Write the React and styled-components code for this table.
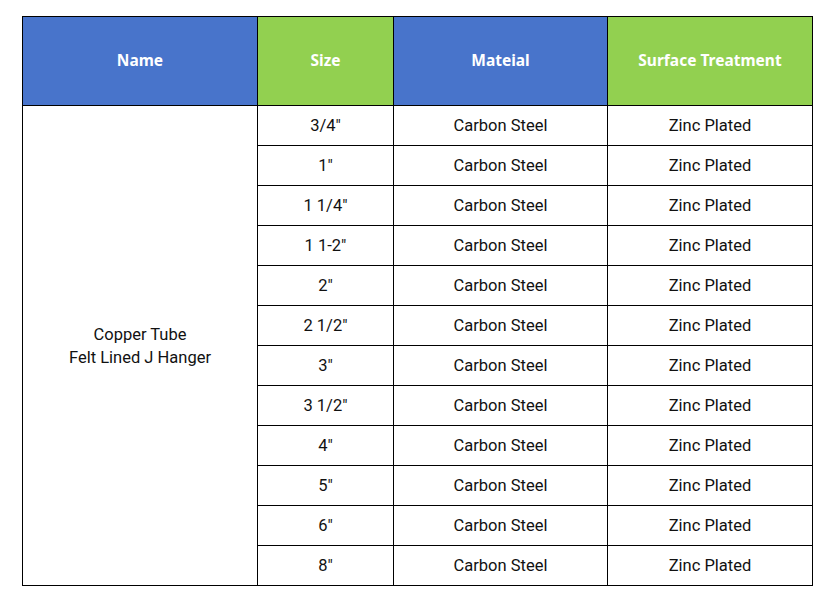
import React from 'react';
import styled, { createGlobalStyle } from 'styled-components';

const GlobalStyle = createGlobalStyle`
  html, body {
    margin: 0;
    padding: 0;
    background: #ffffff;
  }
  body {
    font-family: Roboto, 'Noto Sans', sans-serif;
  }
`;

const Page = styled.div`
  padding: 16px 0 0 22px;
`;

const Table = styled.table`
  border-collapse: collapse;
  table-layout: fixed;
  width: 791px;
`;

const HeadCell = styled.th`
  height: 86px;
  padding: 0 0 2px;
  border: 1px solid #000;
  background: ${({ tone }) => (tone === 'green' ? '#92d050' : '#4874cb')};
  color: #ffffff;
  font-family: 'Noto Sans', sans-serif;
  font-size: 15.5px;
  font-weight: 700;
  text-align: center;
  vertical-align: middle;
`;

const Cell = styled.td`
  height: 39px;
  padding: 0;
  border: 1px solid #000;
  color: #111;
  font-size: 16.5px;
  text-align: center;
  vertical-align: middle;
  line-height: 23px;
`;

const columns = [
  { label: 'Name', tone: 'blue', width: 235 },
  { label: 'Size', tone: 'green', width: 136 },
  { label: 'Mateial', tone: 'blue', width: 214 },
  { label: 'Surface Treatment', tone: 'green', width: 205 },
];

const sizes = ['3/4"', '1"', '1 1/4"', '1 1-2"', '2"', '2 1/2"', '3"', '3 1/2"', '4"', '5"', '6"', '8"'];

export default function App() {
  return (
    <>
      <GlobalStyle />
      <Page>
        <Table>
          <colgroup>
            {columns.map((c) => (
              <col key={c.label} style={{ width: c.width }} />
            ))}
          </colgroup>
          <thead>
            <tr>
              {columns.map((c) => (
                <HeadCell key={c.label} tone={c.tone}>
                  {c.label}
                </HeadCell>
              ))}
            </tr>
          </thead>
          <tbody>
            {sizes.map((size, i) => (
              <tr key={size}>
                {i === 0 && (
                  <Cell rowSpan={sizes.length}>
                    Copper Tube
                    <br />
                    Felt Lined J Hanger
                  </Cell>
                )}
                <Cell>{size}</Cell>
                <Cell>Carbon Steel</Cell>
                <Cell>Zinc Plated</Cell>
              </tr>
            ))}
          </tbody>
        </Table>
      </Page>
    </>
  );
}
